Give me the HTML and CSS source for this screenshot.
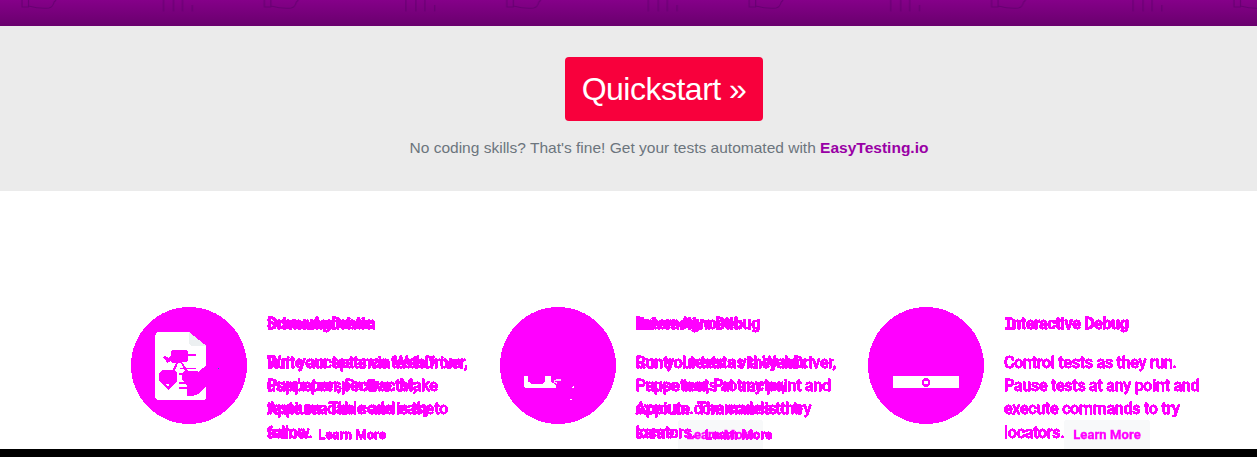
FILE: index.html
```
<!DOCTYPE html>
<html lang="en">
<head>
<meta charset="utf-8">
<title>Quickstart</title>
<link rel="stylesheet" href="styles.css">
</head>
<body>
<svg class="defs" width="0" height="0"><filter id="crisp" x="-5%" y="-10%" width="110%" height="120%"><feComponentTransfer><feFuncA type="discrete" tableValues="0 1 1 1 1 1"/></feComponentTransfer></filter></svg>
<div class="banner">
<svg width="1257" height="26">
<defs><pattern id="doodle" width="242.4" height="26" patternUnits="userSpaceOnUse">
<g class="doodle"><path d="M22 0V7H28.500V0M28.500 6Q40 9 49 8Q53 7 54 2L56 0M163.500 0V11.500M173.500 0V11.500M182.500 0V11.500M192.300 5V11.500"/></g>
</pattern></defs>
<rect width="1257" height="26" fill="url(#doodle)"/>
</svg>
</div>
<section class="hero">
<a class="quickstart">Quickstart »</a>
<p class="note">No coding skills? That's fine! Get your tests automated with <b>EasyTesting.io</b></p>
</section>
<main class="features">
<article class="feature">
<svg class="icon" viewBox="33 21 348 351">
<ellipse class="pink" cx="207" cy="196.500" rx="174" ry="175.500"/>
<path fill="#fff" d="M111 96H207L258 138V198L249 204L237 215L228 213L204 213L190 192L187 187H200L204 181H210V179H204V168H228V162H204V156L198 150H158L152 156V168L145 173L134 168L129 173L137 180V186L143 189L152 183L158 188H168L157 210H126L117 219V243L144 270L171 243V219L165 210L174 190H184L194 212L187 222V240L202 258V288H219L234 282L258 258V296L254 300H111L106 294V105Z"/>
<path fill="#ecf0f1" d="M207 96L258 137H213L207 131Z"/>
<path fill="#fff" d="M137 251H147V258H141Z"/>
<path class="pink" d="M180 204H228V208H180ZM177 219H210V224H177ZM177 246H210V251H177ZM177 261H210V267H177Z"/>
<path fill="#008bb0" d="M294 204h3v3h-3z"/>
</svg>
<div class="copy">
<div class="layer">
<h2>Scenario Driven</h2>
<p>Write acceptance tests from<br>user's perspective. Make<br>tests readable and easy to<br>follow.</p>
</div>
<div class="layer">
<h2>Driver Agnostic</h2>
<p>Run your tests via WebDriver,<br>Puppeteer, Protractor,<br>Appium. The code is the<br>same. <a class="more">Learn More</a></p>
</div>
</div>
</article>
<article class="feature">
<svg class="icon" viewBox="30 21 348 351">
<ellipse class="pink" cx="204" cy="196.500" rx="174" ry="175.500"/>
<path fill="#fff" d="M102 228H114V244L123 251H157L165 244V228H183V244L198 256V264H105L102 258ZM246 261L249 258H252V263H246ZM240 297H246V300H240Z"/>
<path fill="none" stroke="#f8d8ff" stroke-width="3" d="M193 246V241H199V237H211V242H199M193 246H198V253"/>
</svg>
<div class="copy">
<div class="layer">
<h2>Driver Agnostic</h2>
<p>Run your tests via WebDriver,<br>Puppeteer, Protractor,<br>Appium. The code is the<br>same. <a class="more boxed">Learn More</a></p>
</div>
<div class="layer">
<h2><span class="cap">I</span>nteractive Debug</h2>
<p>Control tests as they run.<br>Pause tests at any point and<br>execute commands to try<br>locators. <a class="more">Learn More</a></p>
</div>
</div>
</article>
<article class="feature">
<svg class="icon" viewBox="24 21 348 351">
<ellipse class="pink" cx="198" cy="196.500" rx="174" ry="175.500"/>
<path fill="#fff" d="M99 228H297V264H99Z"/>
<path class="pink" fill-rule="evenodd" d="M193 234H203L210 241V254L203 261H193L186 254V241ZM192 243V252H204V243Z"/>
</svg>
<div class="copy">
<div class="layer">
<h2><span class="cap">I</span>nteractive Debug</h2>
<p>Control tests as they run.<br>Pause tests at any point and<br>execute commands to try<br>locators. <a class="more boxed">Learn More</a></p>
</div>
</div>
</article>
</main>
<div class="bottom"></div>
</body>
</html>
```
FILE: styles.css
```
* { box-sizing: border-box; }
body { margin: 0; height: 457px; overflow: hidden; display: flex; flex-direction: column; background: #fff; font-family: "Liberation Sans", Arial, sans-serif; }
.defs { position: absolute; }
.banner { height: 26px; flex: none; background: linear-gradient(#850089, #69006d); }
.banner svg { display: block; }
.doodle { fill: none; stroke: #5a0068; stroke-opacity: .65; stroke-width: 1.200; }
.hero { height: 165px; flex: none; padding-top: 31px; background: #ebebeb; display: flex; flex-direction: column; align-items: center; }
.quickstart { width: 198px; height: 64px; margin-left: 71px; border-radius: 4px; background: #f8003c; color: #fff; font-size: 32px; letter-spacing: -.5px; line-height: 64px; text-align: center; white-space: nowrap; }
.note { margin: 17px 0 0 81px; color: #6c757d; font-size: 15.530px; line-height: 20px; white-space: nowrap; }
.note b { color: #9900a5; }
.features { height: 258px; flex: none; padding: 116px 0 0 131px; display: grid; grid-template-columns: 368.500px 368.500px 368.500px; overflow: hidden; }
.feature { display: flex; gap: 20px; align-items: flex-start; }
.icon { width: 116px; height: 117px; flex: none; shape-rendering: crispEdges; }
.pink { fill: #f0f; }
.copy { display: grid; color: #f0f; font-family: Roboto, sans-serif; -webkit-text-stroke: .35px #f0f; }
.layer { grid-area: 1 / 1; white-space: nowrap; }
.layer h2 { margin: 5px 0 0; height: 23px; font-size: 16px; line-height: 23px; font-weight: 700; letter-spacing: -.35px; filter: url(#crisp); }
.cap { font-family: "Liberation Mono", monospace; letter-spacing: -1.500px; }
.layer p { margin: 16px 0 0; font-size: 16px; line-height: 23.200px; font-weight: 500; letter-spacing: -.25px; filter: url(#crisp); }
.more { display: inline-block; height: 29px; margin: -1px 0 0 -4px; padding: 0 9px; border-radius: 4px 4px 0 0; font-size: 13px; line-height: 29px; font-weight: 700; letter-spacing: .1px; vertical-align: top; }
.boxed { background: #f8f9fa; }
.bottom { height: 8px; flex: none; background: #000; }
```
